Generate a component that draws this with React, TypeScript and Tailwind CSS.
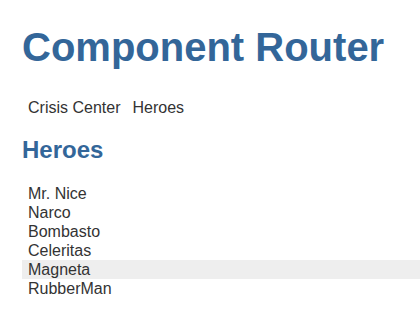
import { useState } from "react";

const HEROES = ["Mr. Nice", "Narco", "Bombasto", "Celeritas", "Magneta", "RubberMan"];

export default function App() {
  const [hovered, setHovered] = useState("Magneta");

  return (
    <div className="min-h-[328px] bg-white pl-[22px] pt-[24px] font-['Liberation_Sans',Arial,sans-serif] text-[#333]">
      <h1 className="text-[40px] font-bold leading-[46px] text-[#336699]">Component Router</h1>

      <nav className="mt-[28px] flex text-[16px] leading-[19px]">
        <a className="px-[6px]">Crisis Center</a>
        <a className="px-[6px]">Heroes</a>
      </nav>

      <h2 className="mt-[19px] text-[24px] font-bold leading-[28px] text-[#336699]">Heroes</h2>

      <ul className="mt-[20px] text-[16px] leading-[19px]">
        {HEROES.map((name) => (
          <li
            key={name}
            onMouseEnter={() => setHovered(name)}
            className={name === hovered ? "h-[19px] bg-[#eeeeee] px-[6px]" : "h-[19px] px-[6px]"}
          >
            {name}
          </li>
        ))}
      </ul>
    </div>
  );
}
